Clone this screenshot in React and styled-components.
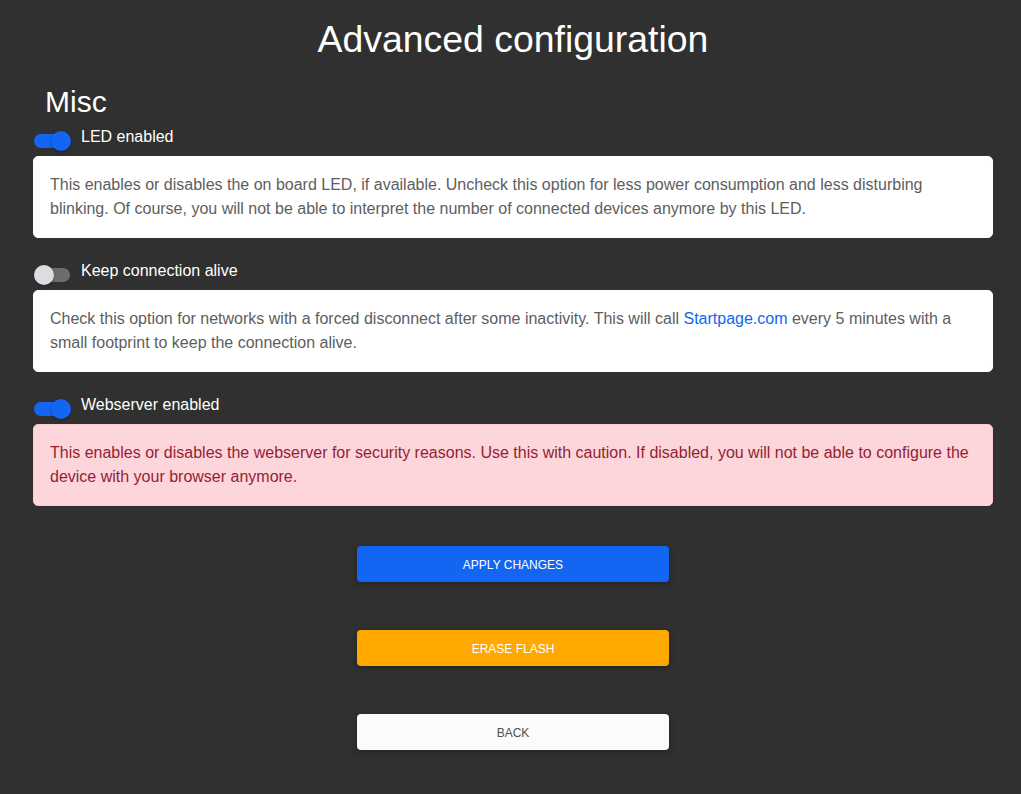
import React, { useState } from "react";
import styled, { createGlobalStyle } from "styled-components";

// STYLES

const GlobalStyle = createGlobalStyle`
  html, body {
    margin: 0;
    padding: 0;
    background-color: #303030;
  }
  body {
    font-family: "Liberation Sans", Arial, sans-serif;
    min-height: 794px;
  }
`;

const Page = styled.div`
  padding: 17px 28px 40px 33px;
  color: #ffffff;
`;

const Title = styled.h1`
  margin: 0;
  font-size: 37.4px;
  line-height: 44px;
  font-weight: 400;
  text-align: center;
`;

const SectionTitle = styled.h2`
  margin: 23px 0 0;
  padding-left: 12px;
  font-size: 30px;
  line-height: 36px;
  font-weight: 400;
`;

const Options = styled.div`
  margin-top: 4px;
  display: flex;
  flex-direction: column;
  gap: 20px;
`;

const Option = styled.div`
  display: flex;
  flex-direction: column;
  gap: 8px;
`;

const SwitchRow = styled.label`
  display: flex;
  align-items: flex-start;
  height: 24px;
  padding-left: 1px;
  font-size: 16px;
  line-height: 26px;
  cursor: pointer;
`;

const Track = styled.span`
  position: relative;
  flex: none;
  width: 36px;
  height: 14px;
  margin-top: 10px;
  margin-right: 11px;
  border-radius: 7px;
  background-color: ${(p) => (p.$on ? "#1266f1" : "#6d6d6d")};
`;

const Knob = styled.span`
  position: absolute;
  top: -3px;
  left: ${(p) => (p.$on ? "17px" : "0")};
  width: 20px;
  height: 20px;
  border-radius: 50%;
  background-color: ${(p) => (p.$on ? "#1266f1" : "#dcdde1")};
  box-shadow: 0 1px 3px rgba(0, 0, 0, 0.3);
  transition: left 0.15s;
`;

const Note = styled.div`
  padding: 16px;
  border: 1px solid ${(p) => (p.$danger ? "#fbcbd3" : "#fdfdfe")};
  border-radius: 5px;
  background-color: ${(p) => (p.$danger ? "#fdd6dc" : "#ffffff")};
  color: ${(p) => (p.$danger ? "#961d33" : "#5e5e5e")};
  font-size: 16px;
  line-height: 24px;
`;

const Link = styled.a`
  color: #1266f1;
  text-decoration: none;
`;

const Buttons = styled.div`
  margin-top: 40px;
  display: flex;
  flex-direction: column;
  align-items: center;
  gap: 48px;
`;

const variants = {
  primary: { bg: "#1266f1", fg: "#ffffff" },
  warning: { bg: "#ffa900", fg: "#ffffff" },
  light: { bg: "#fbfbfb", fg: "#4f4f4f" }
};

const Button = styled.button`
  width: 312px;
  height: 36px;
  padding: 2px 0 0;
  border: none;
  border-radius: 4px;
  background-color: ${(p) => variants[p.$variant].bg};
  color: ${(p) => variants[p.$variant].fg};
  font-family: "Liberation Sans", Arial, sans-serif;
  font-size: 12px;
  text-transform: uppercase;
  box-shadow: 0 2px 5px 0 rgba(0, 0, 0, 0.2), 0 2px 10px 0 rgba(0, 0, 0, 0.1);
  cursor: pointer;
`;

// COMPONENTS

const Switch = ({ on, onToggle, children }) => (
  <SwitchRow onClick={onToggle}>
    <Track $on={on}>
      <Knob $on={on} />
    </Track>
    {children}
  </SwitchRow>
);

export default function App() {
  const [led, setLed] = useState(true);
  const [keepAlive, setKeepAlive] = useState(false);
  const [webserver, setWebserver] = useState(true);

  return (
    <Page>
      <GlobalStyle />
      <Title>Advanced configuration</Title>
      <SectionTitle>Misc</SectionTitle>
      <Options>
        <Option>
          <Switch on={led} onToggle={() => setLed(!led)}>
            LED enabled
          </Switch>
          <Note>
            This enables or disables the on board LED, if available. Uncheck
            this option for less power consumption and less disturbing
            blinking. Of course, you will not be able to interpret the number
            of connected devices anymore by this LED.
          </Note>
        </Option>
        <Option>
          <Switch on={keepAlive} onToggle={() => setKeepAlive(!keepAlive)}>
            Keep connection alive
          </Switch>
          <Note>
            Check this option for networks with a forced disconnect after some
            inactivity. This will call <Link href="#">Startpage.com</Link>{" "}
            every 5 minutes with a small footprint to keep the connection
            alive.
          </Note>
        </Option>
        <Option>
          <Switch on={webserver} onToggle={() => setWebserver(!webserver)}>
            Webserver enabled
          </Switch>
          <Note $danger>
            This enables or disables the webserver for security reasons. Use
            this with caution. If disabled, you will not be able to configure
            the device with your browser anymore.
          </Note>
        </Option>
      </Options>
      <Buttons>
        <Button $variant="primary">Apply changes</Button>
        <Button $variant="warning">Erase flash</Button>
        <Button $variant="light">Back</Button>
      </Buttons>
    </Page>
  );
}
